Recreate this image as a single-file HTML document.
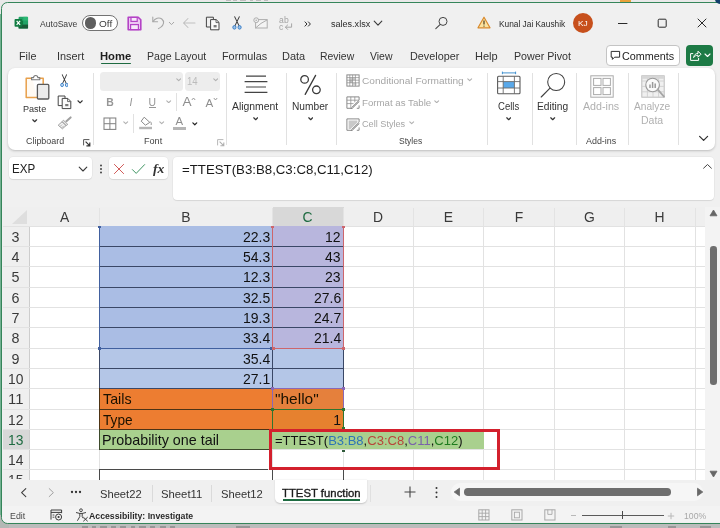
<!DOCTYPE html>
<html lang="en"><head><meta charset="utf-8"><title>sales.xlsx - Excel</title>
<style>
html,body{margin:0;padding:0;}
body{width:720px;height:528px;overflow:hidden;background:#e9e9e9;}
#root{will-change:transform;position:relative;width:720px;height:528px;overflow:hidden;background:#e9e9e9;font-family:"Liberation Sans",sans-serif;}
#root div,#root svg,#root span{position:absolute;box-sizing:border-box;}
.t{white-space:nowrap;line-height:1;}
#root span.f{position:static;}
#win{left:0.8px;top:2px;width:740px;height:522px;border:1.5px solid #35855a;border-radius:6.5px;background:#f0f0f0;}
#ribbon{left:8px;top:67.6px;width:707.2px;height:82px;background:#fff;border-radius:7px;box-shadow:0 1px 2.5px rgba(0,0,0,.22);}
.vsep{width:1px;background:#e1e1e1;}
.box{background:#fff;border-radius:4px;box-shadow:0 0 0 .5px rgba(0,0,0,.06),0 1px 1px rgba(0,0,0,.08);}
.gl{background:#e2e2e2;}

</style></head>
<body>
<div id="root">
<div style="left:0;top:522px;width:720px;height:6px;background:#bcbcbc;"></div>
<div style="left:82px;top:526px;width:6px;height:1.6px;background:#5e5e5e;opacity:.4;"></div>
<div style="left:92px;top:526px;width:4px;height:1.6px;background:#5e5e5e;opacity:.4;"></div>
<div style="left:100px;top:526px;width:7px;height:1.6px;background:#5e5e5e;opacity:.4;"></div>
<div style="left:111px;top:526px;width:5px;height:1.6px;background:#5e5e5e;opacity:.4;"></div>
<div style="left:120px;top:526px;width:6px;height:1.6px;background:#5e5e5e;opacity:.4;"></div>
<div style="left:131px;top:526px;width:4px;height:1.6px;background:#5e5e5e;opacity:.4;"></div>
<div style="left:139px;top:526px;width:7px;height:1.6px;background:#5e5e5e;opacity:.4;"></div>
<div style="left:150px;top:526px;width:5px;height:1.6px;background:#5e5e5e;opacity:.4;"></div>
<div style="left:160px;top:526px;width:6px;height:1.6px;background:#5e5e5e;opacity:.4;"></div>
<div style="left:170px;top:526px;width:5px;height:1.6px;background:#5e5e5e;opacity:.4;"></div>
<div style="left:236px;top:526px;width:14px;height:1.6px;background:#5e5e5e;opacity:.4;"></div>
<div style="left:610px;top:526px;width:12px;height:1.6px;background:#5e5e5e;opacity:.4;"></div>
<div style="left:668px;top:526px;width:8px;height:1.6px;background:#5e5e5e;opacity:.4;"></div>
<div style="left:700px;top:526px;width:11px;height:1.6px;background:#5e5e5e;opacity:.4;"></div>
<div style="left:620px;top:0;width:11px;height:1.6px;background:#e9a23b;"></div>
<div style="left:226px;top:0;width:5px;height:1.4px;background:#8a8a8a;opacity:.45;"></div>
<div style="left:233px;top:0;width:4px;height:1.4px;background:#8a8a8a;opacity:.45;"></div>
<div style="left:240px;top:0;width:6px;height:1.4px;background:#8a8a8a;opacity:.45;"></div>
<div style="left:250px;top:0;width:3px;height:1.4px;background:#8a8a8a;opacity:.45;"></div>
<div style="left:256px;top:0;width:5px;height:1.4px;background:#8a8a8a;opacity:.45;"></div>
<div style="left:264px;top:0;width:4px;height:1.4px;background:#8a8a8a;opacity:.45;"></div>
<div style="left:0;top:14px;width:2px;height:502px;background:#74b192;"></div>
<div style="left:0;top:515px;width:9px;height:13px;background:#b4b8b5;"></div>
<div id="win"></div>
<div style="left:715px;top:-2px;width:10px;height:5.6px;background:#123f6b;border-radius:0 0 0 5px;"></div>
<div style="left:2.5px;top:207px;width:702.5px;height:273px;background:#efefef;"></div>
<div style="left:30px;top:226px;width:675px;height:254px;background:#fff;"></div>
<div style="left:272.5px;top:206.5px;width:71px;height:20.5px;background:#d8d8d8;border-bottom:1.2px solid #1e6b41;"></div>
<div style="left:2.5px;top:429px;width:27.5px;height:20.5px;background:#d8d8d8;border-right:1.5px solid #1e6b41;"></div>
<svg style="left:11px;top:209px" width="17" height="16" viewBox="0 0 17 16"><path d="M16 1 V15 H1 Z" fill="#dedede"/></svg>
<div style="left:99px;top:208px;width:1px;height:18px;background:#e3e3e3;"></div>
<div style="left:272px;top:208px;width:1px;height:18px;background:#e3e3e3;"></div>
<div style="left:343px;top:208px;width:1px;height:18px;background:#e3e3e3;"></div>
<div style="left:413px;top:208px;width:1px;height:18px;background:#e3e3e3;"></div>
<div style="left:483px;top:208px;width:1px;height:18px;background:#e3e3e3;"></div>
<div style="left:554px;top:208px;width:1px;height:18px;background:#e3e3e3;"></div>
<div style="left:624px;top:208px;width:1px;height:18px;background:#e3e3e3;"></div>
<div style="left:695px;top:208px;width:1px;height:18px;background:#e3e3e3;"></div>
<div class="gl" style="left:29px;top:226px;width:1px;height:254px;background:#cdcdcd;"></div>
<div class="gl" style="left:99px;top:226px;width:1px;height:254px;"></div>
<div class="gl" style="left:272px;top:226px;width:1px;height:254px;"></div>
<div class="gl" style="left:343px;top:226px;width:1px;height:254px;"></div>
<div class="gl" style="left:413px;top:226px;width:1px;height:254px;"></div>
<div class="gl" style="left:483px;top:226px;width:1px;height:254px;"></div>
<div class="gl" style="left:554px;top:226px;width:1px;height:254px;"></div>
<div class="gl" style="left:624px;top:226px;width:1px;height:254px;"></div>
<div class="gl" style="left:695px;top:226px;width:1px;height:254px;"></div>
<div class="gl" style="left:2.5px;top:226px;width:702.5px;height:1px;"></div>
<div class="gl" style="left:2.5px;top:246px;width:702.5px;height:1px;"></div>
<div class="gl" style="left:2.5px;top:266px;width:702.5px;height:1px;"></div>
<div class="gl" style="left:2.5px;top:287px;width:702.5px;height:1px;"></div>
<div class="gl" style="left:2.5px;top:307px;width:702.5px;height:1px;"></div>
<div class="gl" style="left:2.5px;top:327px;width:702.5px;height:1px;"></div>
<div class="gl" style="left:2.5px;top:348px;width:702.5px;height:1px;"></div>
<div class="gl" style="left:2.5px;top:368px;width:702.5px;height:1px;"></div>
<div class="gl" style="left:2.5px;top:388px;width:702.5px;height:1px;"></div>
<div class="gl" style="left:2.5px;top:409px;width:702.5px;height:1px;"></div>
<div class="gl" style="left:2.5px;top:429px;width:702.5px;height:1px;"></div>
<div class="gl" style="left:2.5px;top:449px;width:702.5px;height:1px;"></div>
<div class="gl" style="left:2.5px;top:469px;width:702.5px;height:1px;"></div>
<div style="left:99.0px;top:226.0px;width:173.0px;height:122.0px;background:#aabde4;"></div>
<div style="left:99.0px;top:348.0px;width:245.0px;height:40.0px;background:#b4c6e7;"></div>
<div style="left:272.0px;top:226.0px;width:72.0px;height:122.0px;background:#b8b6dd;"></div>
<div style="left:99.0px;top:388.0px;width:173.0px;height:41.0px;background:#ed7d31;"></div>
<div style="left:272.0px;top:388.0px;width:72.0px;height:21.0px;background:#e5803c;"></div>
<div style="left:272.0px;top:409.0px;width:72.0px;height:20.0px;background:#e6812f;"></div>
<div style="left:99.0px;top:429.0px;width:173.0px;height:20.0px;background:#a9d08e;"></div>
<div style="left:271.0px;top:431.0px;width:213.0px;height:18.0px;background:#a9d08e;"></div>
<div style="left:99.0px;top:246.0px;width:245.0px;height:1.0px;background:#3a4766;"></div>
<div style="left:99.0px;top:266.0px;width:245.0px;height:1.0px;background:#3a4766;"></div>
<div style="left:99.0px;top:287.0px;width:245.0px;height:1.0px;background:#3a4766;"></div>
<div style="left:99.0px;top:307.0px;width:245.0px;height:1.0px;background:#3a4766;"></div>
<div style="left:99.0px;top:327.0px;width:245.0px;height:1.0px;background:#3a4766;"></div>
<div style="left:99.0px;top:348.0px;width:245.0px;height:1.0px;background:#3a4766;"></div>
<div style="left:99.0px;top:368.0px;width:245.0px;height:1.0px;background:#3a4766;"></div>
<div style="left:99.0px;top:388.0px;width:245.0px;height:1.0px;background:#3a4766;"></div>
<div style="left:99.0px;top:409.0px;width:245.0px;height:1.0px;background:#4d3315;"></div>
<div style="left:99.0px;top:429.0px;width:245.0px;height:1.0px;background:#4d3315;"></div>
<div style="left:99.0px;top:449.0px;width:171.0px;height:1.0px;background:#3d4a2c;"></div>
<div style="left:99.0px;top:226.0px;width:1.0px;height:162.0px;background:#3a4766;"></div>
<div style="left:99.0px;top:388.0px;width:1.0px;height:41.0px;background:#4d3315;"></div>
<div style="left:99.0px;top:429.0px;width:1.0px;height:21.0px;background:#3d4a2c;"></div>
<div style="left:272.0px;top:348.0px;width:1.0px;height:40.0px;background:#3a4766;"></div>
<div style="left:272.0px;top:388.0px;width:1.0px;height:41.0px;background:#4d3315;"></div>
<div style="left:343.0px;top:348.0px;width:1.0px;height:40.0px;background:#3a4766;"></div>
<div style="left:99.0px;top:469.0px;width:169.0px;height:1.0px;background:#4a4a4a;"></div>
<div style="left:99.0px;top:469.0px;width:1.0px;height:11.0px;background:#4a4a4a;"></div>
<div style="left:272.0px;top:470.0px;width:1.0px;height:10.0px;background:#4a4a4a;"></div>
<div style="left:343.0px;top:470.0px;width:1.0px;height:10.0px;background:#4a4a4a;"></div>
<div style="left:99.0px;top:226.0px;width:1.0px;height:123.0px;background:#41609f;"></div>
<div style="left:99.0px;top:348.0px;width:173.0px;height:1.0px;background:#41609f;"></div>
<div style="left:272.0px;top:226.0px;width:1.0px;height:123.0px;background:#cd666c;"></div>
<div style="left:343.0px;top:226.0px;width:1.0px;height:123.0px;background:#cd666c;"></div>
<div style="left:272.0px;top:348.0px;width:72.0px;height:1.0px;background:#cd666c;"></div>
<div style="left:272.0px;top:388.0px;width:1.0px;height:22.0px;background:#8a68b6;"></div>
<div style="left:343.0px;top:388.0px;width:1.0px;height:22.0px;background:#8a68b6;"></div>
<div style="left:272.0px;top:388.0px;width:72.0px;height:1.0px;background:#8a68b6;"></div>
<div style="left:272.0px;top:409.0px;width:1.0px;height:20.0px;background:#2f752f;"></div>
<div style="left:343.0px;top:409.0px;width:1.0px;height:20.0px;background:#2f752f;"></div>
<div style="left:272.0px;top:409.0px;width:72.0px;height:1.0px;background:#2f752f;"></div>
<div style="left:98.0px;top:347.0px;width:3.0px;height:3.0px;background:#41609f;"></div>
<div style="left:270.0px;top:347.0px;width:3.0px;height:3.0px;background:#41609f;"></div>
<div style="left:98.0px;top:226.0px;width:3.0px;height:2.0px;background:#41609f;"></div>
<div style="left:342.0px;top:347.0px;width:3.0px;height:3.0px;background:#cd666c;"></div>
<div style="left:272.0px;top:347.0px;width:3.0px;height:3.0px;background:#cd666c;"></div>
<div style="left:271.0px;top:226.0px;width:3.0px;height:2.0px;background:#cd666c;"></div>
<div style="left:342.0px;top:226.0px;width:3.0px;height:2.0px;background:#cd666c;"></div>
<div style="left:271.0px;top:387.0px;width:3.0px;height:3.0px;background:#8a68b6;"></div>
<div style="left:342.0px;top:387.0px;width:3.0px;height:3.0px;background:#8a68b6;"></div>
<div style="left:271.0px;top:408.0px;width:3.0px;height:3.0px;background:#2f752f;"></div>
<div style="left:342.0px;top:408.0px;width:3.0px;height:3.0px;background:#2f752f;"></div>
<div style="left:342.0px;top:427.0px;width:3.0px;height:3.0px;background:#2f752f;"></div>
<div style="left:342.0px;top:450.0px;width:3.0px;height:2.0px;background:#2f5a3a;"></div>
<div style="left:268.5px;top:429px;width:231.3px;height:40.8px;border:3.1px solid #d3202d;"></div>
<div class="t" id="cf" style="left:274.6px;top:434px;font-size:13.4px;color:#111;transform-origin:0 0;transform:scaleX(0.972);">=TTEST(<span class="f" style="color:#2e75b6">B3:B8</span>,<span class="f" style="color:#b8453a">C3:C8</span>,<span class="f" style="color:#7a62aa">C11</span>,<span class="f" style="color:#1e7b1e">C12</span>)</div>
<div style="left:705.0px;top:207.0px;width:15.0px;height:273.0px;background:#f3f3f3;"></div>
<svg style="left:709px;top:209px" width="9" height="8" viewBox="0 0 9 8"><path d="M1 6.8 L4.5 1 L8 6.8 Z" fill="#666" stroke="#666" stroke-width=".8" stroke-linejoin="round"/></svg>
<svg style="left:709px;top:470.4px" width="9" height="8" viewBox="0 0 9 8"><path d="M1 1.2 L4.5 7 L8 1.2 Z" fill="#666" stroke="#666" stroke-width=".8" stroke-linejoin="round"/></svg>
<div style="left:710.3px;top:245.5px;width:6.4px;height:139px;background:#6e6e6e;border-radius:3.2px;"></div>
<div style="left:2.5px;top:480.0px;width:717.5px;height:26.0px;background:#f0f0f0;"></div>
<div style="left:275px;top:480px;width:91.5px;height:23.4px;background:#fff;border-radius:0 0 5px 5px;box-shadow:0 0.5px 1.5px rgba(0,0,0,.18);"></div>
<div style="left:282.5px;top:499.3px;width:77.8px;height:1.7px;background:#1e6b41;"></div>
<div style="left:152.0px;top:485.0px;width:1.0px;height:17.0px;background:#dadada;"></div>
<div style="left:211.0px;top:485.0px;width:1.0px;height:17.0px;background:#dadada;"></div>
<div style="left:370.0px;top:485.0px;width:1.0px;height:17.0px;background:#e0e0e0;"></div>
<svg style="left:19px;top:485.8px" width="10" height="13" viewBox="0 0 10 13"><path d="M6.8 2.6 L2.6 6.6 L6.8 10.6" fill="none" stroke="#3a3a3a" stroke-width="1.05" stroke-linecap="round" stroke-linejoin="round"/></svg>
<svg style="left:46px;top:485.8px" width="10" height="13" viewBox="0 0 10 13"><path d="M3.2 2.6 L7.4 6.6 L3.2 10.6" fill="none" stroke="#a2a2a2" stroke-width="1" stroke-linecap="round" stroke-linejoin="round"/></svg>
<svg style="left:70px;top:489px" width="12" height="6" viewBox="0 0 12 6"><circle cx="2" cy="3" r="1.15" fill="#333"/><circle cx="6" cy="3" r="1.15" fill="#333"/><circle cx="10" cy="3" r="1.15" fill="#333"/></svg>
<svg style="left:402.6px;top:485.3px" width="14" height="14" viewBox="0 0 14 14"><path d="M7 1.5 V12.5 M1.5 7 H12.5" stroke="#444" stroke-width="1.1"/></svg>
<svg style="left:434px;top:486px" width="5" height="13" viewBox="0 0 5 13"><circle cx="2.5" cy="2" r="1" fill="#333"/><circle cx="2.5" cy="6.5" r="1" fill="#333"/><circle cx="2.5" cy="11" r="1" fill="#333"/></svg>
<div style="left:451px;top:483px;width:252px;height:18px;background:#f6f6f6;border-radius:9px;"></div>
<svg style="left:453px;top:487px" width="8" height="10" viewBox="0 0 8 10"><path d="M6.5 1.2 L1.2 5 L6.5 8.8 Z" fill="#686868" stroke="#686868" stroke-width=".8" stroke-linejoin="round"/></svg>
<svg style="left:695.5px;top:487px" width="8" height="10" viewBox="0 0 8 10"><path d="M1.5 1.2 L6.8 5 L1.5 8.8 Z" fill="#686868" stroke="#686868" stroke-width=".8" stroke-linejoin="round"/></svg>
<div style="left:464px;top:488.3px;width:207px;height:7.6px;background:#6e6e6e;border-radius:3.8px;"></div>
<div style="left:2.5px;top:505.5px;width:717.5px;height:0.8px;background:#e2e2e2;"></div>
<div style="left:2.3px;top:506.3px;width:717.7px;height:16.2px;background:#f3f3f3;border-radius:0 0 0 5px;"></div><!-- ============ TITLE BAR ============ -->
<!-- excel logo -->
<svg style="left:14px;top:16.3px" width="14.6" height="13.4" viewBox="0 0 16 14">
  <rect x="5" y="0.6" width="10.4" height="12.8" rx="1.2" fill="#21a366"/>
  <rect x="10.2" y="0.6" width="5.2" height="4.3" fill="#2bb673"/>
  <rect x="5" y="4.9" width="5.2" height="4.2" fill="#107c41"/>
  <rect x="10.2" y="4.9" width="5.2" height="4.2" fill="#21a366"/>
  <rect x="5" y="9.1" width="10.4" height="4.3" fill="#185c37"/>
  <rect x="0.6" y="3" width="8.4" height="8.4" rx="1" fill="#107c41"/>
  <path d="M2.9 4.9 L6.7 9.5 M6.7 4.9 L2.9 9.5" stroke="#fff" stroke-width="1.3"/>
</svg>
<!-- autosave toggle -->
<div style="left:82px;top:15px;width:35.5px;height:16px;border:1px solid #737373;border-radius:8px;background:#fff;"></div>
<div style="left:84.8px;top:17.2px;width:11.6px;height:11.6px;border-radius:50%;background:#5e5e5e;"></div>
<!-- save -->
<svg style="left:126.5px;top:15.5px" width="15" height="15" viewBox="0 0 15 15">
  <path d="M1.2 1.2 H11.2 L13.8 3.8 V13.8 H1.2 Z" fill="#ecc6f2" stroke="#b443c6" stroke-width="1.6" stroke-linejoin="round"/>
  <rect x="4" y="1.4" width="6.2" height="4" fill="#f7e9fa" stroke="#b443c6" stroke-width="1.2"/>
  <rect x="3.6" y="8.6" width="7.8" height="5" fill="#f7e9fa" stroke="#b443c6" stroke-width="1.2"/>
</svg>
<!-- undo -->
<svg style="left:151px;top:15px" width="15" height="15" viewBox="0 0 15 15">
  <path d="M1.8 2 V6.8 H6.6" fill="none" stroke="#a6a6a6" stroke-width="1.05" stroke-linecap="round" stroke-linejoin="round"/>
  <path d="M2 6.6 C4 3.2 8 2 10.8 4 C13.6 6.2 13 10 9.6 12.4 L7.4 13.6" fill="none" stroke="#a6a6a6" stroke-width="1.05" stroke-linecap="round"/>
</svg>
<svg style="left:168px;top:21px" width="7" height="5" viewBox="0 0 7 5"><path d="M1 1 L3.5 3.6 L6 1" fill="none" stroke="#a8a8a8" stroke-width="1"/></svg>
<!-- back arrow (redo disabled) -->
<svg style="left:182px;top:17px" width="14" height="12" viewBox="0 0 14 12"><path d="M13 6 H1.5 M6 1.5 L1.5 6 L6 10.5" fill="none" stroke="#c0c0c0" stroke-width="1.05" stroke-linecap="round" stroke-linejoin="round"/></svg>
<!-- copy/paste icon -->
<svg style="left:205px;top:16px" width="16" height="15" viewBox="0 0 16 15">
  <path d="M5.2 11 H1.4 V1.2 H8.4 V3.4" fill="none" stroke="#444" stroke-width="1"/>
  <path d="M5.6 3.6 H11.2 L14 6.4 V13.8 H5.6 Z" fill="#fafafa" stroke="#444" stroke-width="1" stroke-linejoin="round"/>
  <path d="M11 3.8 V6.6 H13.8" fill="none" stroke="#444" stroke-width=".8"/>
  <rect x="8.6" y="9" width="3" height="2.4" fill="#7a7a7a"/>
</svg>
<!-- scissors -->
<svg style="left:231.6px;top:16px" width="10" height="14.2" viewBox="0 0 12 15" preserveAspectRatio="none">
  <path d="M3.2 0.8 L8.6 10.6 M8.8 0.8 L3.4 10.6" stroke="#3a3a3a" stroke-width="1.1" stroke-linecap="round"/>
  <circle cx="2.9" cy="12" r="1.9" fill="#9cc3ea" stroke="#2f78c4" stroke-width="1"/>
  <circle cx="9.1" cy="12" r="1.9" fill="#9cc3ea" stroke="#2f78c4" stroke-width="1"/>
</svg>
<!-- mail -->
<svg style="left:252.5px;top:16.5px" width="15" height="12" viewBox="0 0 15 12">
  <rect x="2.6" y="2.6" width="11.6" height="8.4" fill="#f4f4f4" stroke="#adadad" stroke-width="1"/>
  <path d="M2.8 10.8 L8 6.4 L14 3" fill="none" stroke="#adadad" stroke-width="1"/>
  <circle cx="3.2" cy="3.2" r="2.4" fill="#f0f0f0" stroke="#adadad" stroke-width="1"/>
  <circle cx="3.2" cy="3.2" r=".8" fill="#adadad"/>
</svg>
<!-- abc spelling -->
<div class="t" style="left:279px;top:16px;font-size:8.6px;color:#a4a4a4;letter-spacing:.3px;">ab</div>
<div class="t" style="left:279px;top:22.6px;font-size:8.6px;color:#a4a4a4;">c</div>
<svg style="left:283.5px;top:23px" width="9" height="8" viewBox="0 0 9 8"><path d="M7.6 0.8 V4.2 H1.6 M3.6 2 L1.4 4.2 L3.6 6.4" fill="none" stroke="#a6a6a6" stroke-width="1" stroke-linecap="round" stroke-linejoin="round"/></svg>
<!-- >> -->
<svg style="left:304px;top:21px" width="8" height="6" viewBox="0 0 8 6"><path d="M1 .9 L3 3 L1 5.1 M4.4 .9 L6.4 3 L4.4 5.1" fill="none" stroke="#2e2e2e" stroke-width="1" stroke-linecap="round" stroke-linejoin="round"/></svg>
<!-- chevron after filename -->
<svg style="left:373px;top:20px" width="10" height="7" viewBox="0 0 10 7"><path d="M1.2 1.2 L5 5.2 L8.8 1.2" fill="none" stroke="#3a3a3a" stroke-width="1.1" stroke-linecap="round" stroke-linejoin="round"/></svg>
<!-- search -->
<svg style="left:434px;top:16px" width="15" height="14" viewBox="0 0 15 14"><circle cx="9" cy="5.4" r="4" fill="none" stroke="#444" stroke-width="1"/><path d="M6 8.6 L1.8 12.6" stroke="#444" stroke-width="1.05" stroke-linecap="round"/></svg>
<!-- warning -->
<svg style="left:477px;top:16px" width="14" height="13" viewBox="0 0 14 13"><path d="M7 1.2 L13 11.8 H1 Z" fill="#fbe3a0" stroke="#d8892b" stroke-width="1.2" stroke-linejoin="round"/><path d="M7 4.6 V8.4" stroke="#4a3a1a" stroke-width="1.2"/><circle cx="7" cy="10.1" r=".7" fill="#4a3a1a"/></svg>
<!-- avatar -->
<div style="left:573px;top:13px;width:20px;height:20px;border-radius:50%;background:#c7501c;"></div>
<!-- window controls -->
<svg style="left:617px;top:22px" width="12" height="3" viewBox="0 0 12 3"><path d="M1 1.5 H10.4" stroke="#2a2a2a" stroke-width="1"/></svg>
<svg style="left:657px;top:18px" width="11" height="11" viewBox="0 0 11 11"><rect x="1.2" y="1.2" width="8" height="8" rx="1" fill="none" stroke="#2a2a2a" stroke-width="1"/></svg>
<svg style="left:696px;top:16.9px" width="12" height="12" viewBox="0 0 12 12"><path d="M2 2 L10 10 M10 2 L2 10" stroke="#2a2a2a" stroke-width="1" stroke-linecap="round"/></svg>
<!-- ============ TAB ROW ============ -->
<div style="left:100.6px;top:62.6px;width:30.6px;height:1.8px;background:#1e6b41;border-radius:1px;"></div>
<div style="left:605.5px;top:45px;width:74px;height:20.5px;background:#fff;border:1px solid #c4c4c4;border-radius:4px;"></div>
<svg style="left:609.5px;top:49.5px" width="11" height="11" viewBox="0 0 11 11"><path d="M1.2 1.4 H9.6 V7.2 H4.6 L2.4 9.4 V7.2 H1.2 Z" fill="none" stroke="#2e2e2e" stroke-width="1" stroke-linejoin="round"/></svg>
<div style="left:686px;top:45px;width:26.5px;height:20.5px;background:#1d7a45;border-radius:4px;"></div>
<svg style="left:689px;top:48.5px" width="13" height="13" viewBox="0 0 13 13"><path d="M4.2 4.6 H1.6 V11.4 H9.6 V9" fill="none" stroke="#fff" stroke-width="1" stroke-linejoin="round"/><path d="M4.6 8.6 C5 5.6 7 4.4 9 4.4 V2.2 L12 5.2 L9 8.2 V6.2 C7.4 6.2 5.8 6.8 4.6 8.6 Z" fill="none" stroke="#fff" stroke-width="1" stroke-linejoin="round"/></svg>
<svg style="left:703.5px;top:53px" width="7" height="5" viewBox="0 0 7 5"><path d="M1 1 L3.5 3.5 L6 1" fill="none" stroke="#fff" stroke-width="1.1" stroke-linecap="round" stroke-linejoin="round"/></svg>
<!-- ============ RIBBON ============ -->
<div id="ribbon"></div>
<div class="vsep" style="left:93.2px;top:73px;height:72px;"></div>
<div class="vsep" style="left:226px;top:73px;height:72px;"></div>
<div class="vsep" style="left:285.5px;top:73px;height:72px;"></div>
<div class="vsep" style="left:335.5px;top:73px;height:72px;"></div>
<div class="vsep" style="left:486.5px;top:73px;height:72px;"></div>
<div class="vsep" style="left:531.5px;top:73px;height:72px;"></div>
<div class="vsep" style="left:576px;top:73px;height:72px;"></div>
<div class="vsep" style="left:627.5px;top:73px;height:72px;"></div>
<div class="vsep" style="left:677.5px;top:73px;height:72px;"></div>
<div class="vsep" style="left:176.2px;top:93px;height:18px;"></div>
<div class="vsep" style="left:133px;top:114px;height:19px;"></div>
<!-- paste -->
<svg style="left:24px;top:74px" width="27" height="27" viewBox="0 0 27 27">
  <path d="M8.2 4.2 H2.2 V23.4 H13" fill="#fffaf3" stroke="#e8a04b" stroke-width="1.5" stroke-linejoin="round"/>
  <path d="M15.4 4.2 H19.2 V10" fill="none" stroke="#e8a04b" stroke-width="1.5" stroke-linejoin="round"/>
  <path d="M7.6 5.8 V3.6 H9.6 C9.6 0.8 13.8 0.8 13.8 3.6 H15.8 V5.8 Z" fill="#fff" stroke="#7a7a7a" stroke-width="1.1" stroke-linejoin="round"/>
  <rect x="13.4" y="10.4" width="11.4" height="14.6" rx="1" fill="#ececec" stroke="#5a5a5a" stroke-width="1.3"/>
</svg>
<svg style="left:32.3px;top:119.1px" width="5.4" height="3.9" viewBox="0 0 7 5"><path d="M1 1 L3.5 3.5 L6 1" fill="none" stroke="#333" stroke-width="1.54" stroke-linecap="round" stroke-linejoin="round"/></svg>
<!-- scissors -->
<svg style="left:59.6px;top:74px" width="8.8" height="13.6" viewBox="0 0 11 14" preserveAspectRatio="none">
  <path d="M2.8 0.8 L7.8 9.8 M8.2 0.8 L3.2 9.8" stroke="#3a3a3a" stroke-width="1.05" stroke-linecap="round"/>
  <circle cx="2.6" cy="11.3" r="1.7" fill="#cfe2f6" stroke="#2f78c4" stroke-width="1"/>
  <circle cx="8.4" cy="11.3" r="1.7" fill="#cfe2f6" stroke="#2f78c4" stroke-width="1"/>
</svg>
<!-- copy -->
<svg style="left:56.5px;top:95px" width="16" height="15" viewBox="0 0 16 15">
  <path d="M5 10.6 H1.2 V1 H8 V3.2" fill="none" stroke="#444" stroke-width="1"/>
  <path d="M5.2 3.4 H10.8 L13.8 6.4 V13.6 H5.2 Z" fill="#fafafa" stroke="#444" stroke-width="1" stroke-linejoin="round"/>
  <path d="M10.6 3.6 V6.6 H13.6" fill="none" stroke="#444" stroke-width=".8"/>
  <rect x="8.2" y="9" width="3.2" height="2.2" fill="#7a7a7a"/>
</svg>
<svg style="left:76.6px;top:100.4px" width="6.2" height="3.9" viewBox="0 0 8 5"><path d="M1.2 1 L4 3.7 L6.8 1" fill="none" stroke="#333" stroke-width="1.5" stroke-linecap="round" stroke-linejoin="round"/></svg>
<!-- format painter -->
<svg style="left:56.5px;top:116px" width="15" height="14" viewBox="0 0 15 14">
  <path d="M13.6 1.4 L9.4 5.2" stroke="#a0a0a0" stroke-width="2" stroke-linecap="round"/>
  <path d="M6.4 4.2 L10.8 8.4 L9.2 9.6 L5.2 5.6 Z" fill="#e8e8e8" stroke="#a0a0a0" stroke-width="1" stroke-linejoin="round"/>
  <path d="M5 5.8 L1.2 9.2 L5.4 12.8 L9 9.6 Z" fill="#f2f2f2" stroke="#a0a0a0" stroke-width="1" stroke-linejoin="round"/>
  <path d="M3 10.6 L5 8.6 M4.6 12 L6.8 9.8" stroke="#a0a0a0" stroke-width=".8"/>
</svg>
<!-- launchers -->
<svg style="left:83px;top:138.5px" width="8" height="8" viewBox="0 0 8 8"><path d="M0.6 6.4 V0.6 H6.4" fill="none" stroke="#555" stroke-width="1"/><path d="M2.6 2.6 L6.6 6.6 M6.8 3.4 V6.8 H3.4" fill="none" stroke="#333" stroke-width="1.2"/></svg>
<svg style="left:216.5px;top:138.5px" width="8" height="8" viewBox="0 0 8 8"><path d="M0.6 6.4 V0.6 H6.4" fill="none" stroke="#b8b8b8" stroke-width="1"/><path d="M2.6 2.6 L6.6 6.6 M6.8 3.4 V6.8 H3.4" fill="none" stroke="#b0b0b0" stroke-width="1.1"/></svg>
<!-- font boxes -->
<div style="left:100px;top:71.5px;width:82.6px;height:19.2px;background:#ededed;border-radius:3.5px;"></div>
<div style="left:185px;top:71.5px;width:34.8px;height:19.2px;background:#ededed;border-radius:3.5px;"></div>
<svg style="left:175.8px;top:78.1px" width="5.4" height="3.9" viewBox="0 0 7 5"><path d="M1 1 L3.5 3.5 L6 1" fill="none" stroke="#b0b0b0" stroke-width="1.40" stroke-linecap="round" stroke-linejoin="round"/></svg>
<svg style="left:212.8px;top:78.1px" width="5.4" height="3.9" viewBox="0 0 7 5"><path d="M1 1 L3.5 3.5 L6 1" fill="none" stroke="#b0b0b0" stroke-width="1.40" stroke-linecap="round" stroke-linejoin="round"/></svg>
<!-- B I U -->
<div class="t" style="left:106.3px;top:98px;font-size:10.4px;font-weight:700;color:#969696;">B</div>
<div class="t" style="left:129.6px;top:98px;font-size:10.4px;font-style:italic;color:#969696;">I</div>
<div class="t" style="left:148.6px;top:98px;font-size:10.4px;color:#969696;">U</div>
<div style="left:149px;top:106.8px;width:7.2px;height:1px;background:#969696;"></div>
<svg style="left:166.2px;top:99.6px" width="5.4" height="3.9" viewBox="0 0 7 5"><path d="M1 1 L3.5 3.5 L6 1" fill="none" stroke="#b0b0b0" stroke-width="1.40" stroke-linecap="round" stroke-linejoin="round"/></svg>
<!-- A^ A v -->
<div class="t" style="left:182.6px;top:95.4px;font-size:13.6px;color:#8e8e8e;">A</div>
<svg style="left:191.4px;top:96.6px" width="5" height="4" viewBox="0 0 5 4"><path d="M0.8 3 L2.5 1 L4.2 3" fill="none" stroke="#8e8e8e" stroke-width=".9"/></svg>
<div class="t" style="left:205.6px;top:97.2px;font-size:11.6px;color:#8e8e8e;">A</div>
<svg style="left:212.6px;top:97.4px" width="5" height="4" viewBox="0 0 5 4"><path d="M0.8 1 L2.5 3 L4.2 1" fill="none" stroke="#8e8e8e" stroke-width=".9"/></svg>
<!-- borders -->
<svg style="left:102.5px;top:116.8px" width="14" height="14" viewBox="0 0 14 14"><rect x="1" y="1" width="11.8" height="11.4" fill="none" stroke="#828282" stroke-width="1.05"/><path d="M6.9 1 V12.4 M1 6.7 H12.8" stroke="#828282" stroke-width="1"/></svg>
<svg style="left:123.4px;top:121.2px" width="5.4" height="3.9" viewBox="0 0 7 5"><path d="M1 1 L3.5 3.5 L6 1" fill="none" stroke="#b0b0b0" stroke-width="1.40" stroke-linecap="round" stroke-linejoin="round"/></svg>
<!-- fill -->
<svg style="left:139px;top:116.4px" width="14" height="14" viewBox="0 0 14 14">
  <path d="M5.2 1.2 L10.8 6.4 L6.4 9.2 L2.2 5.2 Z" fill="#fff" stroke="#8a8a8a" stroke-width="1" stroke-linejoin="round"/>
  <path d="M11.4 5.6 C12.4 7 12.6 8 12 9" fill="none" stroke="#8a8a8a" stroke-width="1"/>
  <rect x="0.2" y="10.8" width="12.8" height="2.4" fill="#b5b5b5"/>
</svg>
<svg style="left:159.2px;top:121.2px" width="5.4" height="3.9" viewBox="0 0 7 5"><path d="M1 1 L3.5 3.5 L6 1" fill="none" stroke="#b0b0b0" stroke-width="1.40" stroke-linecap="round" stroke-linejoin="round"/></svg>
<!-- font color -->
<div class="t" style="left:175.6px;top:115.6px;font-size:11.4px;color:#8e8e8e;">A</div>
<div style="left:173.3px;top:127.2px;width:12.6px;height:2.4px;background:#b5b5b5;"></div>
<svg style="left:192.2px;top:121.6px" width="5.6" height="4.2" viewBox="0 0 8 6"><path d="M1.2 1.2 L4 4 L6.8 1.2" fill="none" stroke="#222" stroke-width="1.7" stroke-linecap="round" stroke-linejoin="round"/></svg>
<!-- alignment -->
<svg style="left:243px;top:74px" width="26" height="21" viewBox="0 0 26 21"><path d="M3 2.2 H23 M1.6 7.6 H24.4 M3 13 H23 M1.6 18.4 H24.4" stroke="#444" stroke-width="1.2"/></svg>
<svg style="left:252.8px;top:117.2px" width="5.4" height="3.9" viewBox="0 0 7 5"><path d="M1 1 L3.5 3.5 L6 1" fill="none" stroke="#333" stroke-width="1.54" stroke-linecap="round" stroke-linejoin="round"/></svg>
<!-- percent -->
<svg style="left:299px;top:74px" width="24" height="22" viewBox="0 0 24 22"><circle cx="5.6" cy="5.4" r="3.8" fill="none" stroke="#3a3a3a" stroke-width="1.3"/><circle cx="17.4" cy="15.8" r="3.8" fill="none" stroke="#3a3a3a" stroke-width="1.3"/><path d="M16.6 1.4 L6.2 20.4" stroke="#3a3a3a" stroke-width="1.3" stroke-linecap="round"/></svg>
<svg style="left:307.8px;top:117.2px" width="5.4" height="3.9" viewBox="0 0 7 5"><path d="M1 1 L3.5 3.5 L6 1" fill="none" stroke="#333" stroke-width="1.54" stroke-linecap="round" stroke-linejoin="round"/></svg>
<!-- styles icons -->
<svg style="left:345.6px;top:74.4px" width="14" height="13" viewBox="0 0 14 13"><rect x=".9" y=".9" width="12.2" height="11.2" fill="#fff" stroke="#858585" stroke-width=".95"/><rect x="3.8" y="3.6" width="5.6" height="2.6" fill="#cfcfcf"/><rect x="3.8" y="6.2" width="2.8" height="2.6" fill="#bdbdbd"/><rect x="6.6" y="8.8" width="4" height="2.6" fill="#d6d6d6"/><path d="M.9 3.6 H13.1 M.9 6.2 H13.1 M.9 8.8 H13.1 M3.8 .9 V12.1 M6.6 .9 V12.1 M9.4 .9 V12.1" stroke="#8c8c8c" stroke-width=".7"/></svg>
<svg style="left:345.6px;top:95.8px" width="14" height="13.4" viewBox="0 0 14 13.4"><path d="M.9 12.3 V.9 H13.1 V4" fill="none" stroke="#858585" stroke-width=".95"/><path d="M.9 12.3 H4.6 M13.1 9.4 V12.3 H10.8" fill="none" stroke="#858585" stroke-width=".95"/><path d="M.9 4.2 H13.1 M.9 7.6 H7.6 M4.8 .9 V12.3 M8.8 .9 V6.4" stroke="#8c8c8c" stroke-width=".75"/><path d="M13 4.4 L5.6 11.6 L4.6 12.6 L6.2 12.4 L13.4 5.4" fill="#fff" stroke="#7d7d7d" stroke-width=".9" stroke-linejoin="round"/><path d="M12 5.6 L6.4 11.2" stroke="#9a9a9a" stroke-width=".8"/></svg>
<svg style="left:345.6px;top:117.6px" width="14" height="13.4" viewBox="0 0 14 13.4"><path d="M.9 12.3 V.9 H13.1 V4" fill="none" stroke="#858585" stroke-width=".95"/><path d="M.9 12.3 H4.6 M13.1 9.4 V12.3 H10.8" fill="none" stroke="#858585" stroke-width=".95"/><path d="M2.6 2.6 H11.4 V4.6 L4.6 11 H2.6 Z" fill="#c9c9c9"/><path d="M13 4.4 L5.6 11.6 L4.6 12.6 L6.2 12.4 L13.4 5.4" fill="#fff" stroke="#7d7d7d" stroke-width=".9" stroke-linejoin="round"/><path d="M12 5.6 L6.4 11.2" stroke="#9a9a9a" stroke-width=".8"/></svg>
<svg style="left:467.4px;top:78.2px" width="5.4" height="3.9" viewBox="0 0 7 5"><path d="M1 1 L3.5 3.5 L6 1" fill="none" stroke="#b0b0b0" stroke-width="1.40" stroke-linecap="round" stroke-linejoin="round"/></svg>
<svg style="left:434.4px;top:99.6px" width="5.4" height="3.9" viewBox="0 0 7 5"><path d="M1 1 L3.5 3.5 L6 1" fill="none" stroke="#b0b0b0" stroke-width="1.40" stroke-linecap="round" stroke-linejoin="round"/></svg>
<svg style="left:409.2px;top:121.0px" width="5.4" height="3.9" viewBox="0 0 7 5"><path d="M1 1 L3.5 3.5 L6 1" fill="none" stroke="#b0b0b0" stroke-width="1.40" stroke-linecap="round" stroke-linejoin="round"/></svg>
<!-- cells -->
<svg style="left:496px;top:70.5px" width="26" height="25" viewBox="0 0 26 25">
  <path d="M6.4 1.9 H19.6 M6.4 .6 V3.2 M19.6 .6 V3.2" stroke="#2f86c9" stroke-width=".9" fill="none"/>
  <rect x="1.6" y="5.2" width="22.4" height="17.6" rx="1" fill="#fff" stroke="#5a5a5a" stroke-width="1.1"/>
  <rect x="7.2" y="10.6" width="11.2" height="6.4" fill="#5aa9ea"/>
  <path d="M1.6 10.6 H24 M1.6 17 H24 M7.2 5.2 V22.8 M18.4 5.2 V22.8" stroke="#6a6a6a" stroke-width=".9"/>
</svg>
<svg style="left:505.8px;top:117.2px" width="5.4" height="3.9" viewBox="0 0 7 5"><path d="M1 1 L3.5 3.5 L6 1" fill="none" stroke="#333" stroke-width="1.54" stroke-linecap="round" stroke-linejoin="round"/></svg>
<!-- editing -->
<svg style="left:539px;top:71.6px" width="28" height="27" viewBox="0 0 28 27"><circle cx="17.2" cy="10" r="8.5" fill="none" stroke="#404040" stroke-width="1.05"/><path d="M11 16.2 L2.2 25" stroke="#404040" stroke-width="1.15" stroke-linecap="round"/></svg>
<svg style="left:550.3px;top:117.2px" width="5.4" height="3.9" viewBox="0 0 7 5"><path d="M1 1 L3.5 3.5 L6 1" fill="none" stroke="#333" stroke-width="1.54" stroke-linecap="round" stroke-linejoin="round"/></svg>
<!-- add-ins -->
<svg style="left:589.5px;top:74.5px" width="24" height="23" viewBox="0 0 24 23"><rect x=".8" y=".8" width="22.4" height="21.4" fill="#fcfcfc" stroke="#ababab" stroke-width="1"/><rect x="3.6" y="3.4" width="7.4" height="7" fill="#fff" stroke="#ababab" stroke-width="1"/><rect x="13" y="3.4" width="7.4" height="7" fill="#fff" stroke="#ababab" stroke-width="1"/><rect x="3.6" y="12.6" width="7.4" height="7" fill="#fff" stroke="#ababab" stroke-width="1"/><rect x="13" y="12.6" width="7.4" height="7" fill="#fff" stroke="#ababab" stroke-width="1"/></svg>
<!-- analyze data -->
<svg style="left:640.5px;top:74.5px" width="24" height="24" viewBox="0 0 24 24"><rect x=".8" y=".8" width="22.4" height="21.4" fill="#f0f0f0" stroke="#bdbdbd" stroke-width="1"/><path d="M.8 6 H23.2 M.8 11.4 H23.2 M.8 16.8 H23.2 M6.4 .8 V22.2 M12 .8 V22.2 M17.6 .8 V22.2" stroke="#cfcfcf" stroke-width=".9"/><rect x=".8" y=".8" width="22.4" height="3" fill="#d6d6d6"/><circle cx="11.6" cy="10" r="6.8" fill="#fafafa" stroke="#9a9a9a" stroke-width="1.1"/><path d="M9 13 V9.6 M11.6 13 V7 M14.2 13 V8.6" stroke="#9a9a9a" stroke-width="1.5"/><path d="M16.6 14.4 L23 21.6" stroke="#a6a6a6" stroke-width="1.8" stroke-linecap="round"/></svg>
<!-- collapse chevron -->
<svg style="left:696.5px;top:135.4px" width="12" height="8" viewBox="0 0 12 8"><path d="M2.6 1.3 L6.6 5.3 L10.6 1.3" fill="none" stroke="#2e2e2e" stroke-width="1.2" stroke-linecap="round" stroke-linejoin="round"/></svg>
<!-- ============ FORMULA BAR ============ -->
<div class="box" style="left:9px;top:156.8px;width:82.5px;height:22.4px;"></div>
<svg style="left:78px;top:166px" width="10" height="7" viewBox="0 0 10 7"><path d="M1.2 1.2 L5 5 L8.8 1.2" fill="none" stroke="#3a3a3a" stroke-width="1.1" stroke-linecap="round" stroke-linejoin="round"/></svg>
<svg style="left:98.5px;top:164px" width="4" height="10" viewBox="0 0 4 10"><circle cx="2" cy="1.6" r="1" fill="#444"/><circle cx="2" cy="5" r="1" fill="#444"/><circle cx="2" cy="8.4" r="1" fill="#444"/></svg>
<div class="box" style="left:108.8px;top:156.8px;width:59.5px;height:22.4px;"></div>
<svg style="left:113px;top:163px" width="12" height="12" viewBox="0 0 12 12"><path d="M1.4 1.4 L10.6 10.6 M10.6 1.4 L1.4 10.6" stroke="#cf5250" stroke-width=".95" stroke-linecap="round"/></svg>
<svg style="left:131px;top:163px" width="15" height="12" viewBox="0 0 15 12"><path d="M1.4 6.6 L5.2 10.4 L13.6 1.6" fill="none" stroke="#3f9563" stroke-width="1" stroke-linecap="round" stroke-linejoin="round"/></svg>
<div class="box" style="left:173px;top:156.8px;width:540.8px;height:43.6px;"></div>
<svg style="left:701.6px;top:163.2px" width="11" height="7" viewBox="0 0 11 7"><path d="M1.6 5.2 L5.5 1.5 L9.4 5.2" fill="none" stroke="#444" stroke-width="1" stroke-linecap="round" stroke-linejoin="round"/></svg>
<!-- ============ STATUS BAR ICONS ============ -->
<svg style="left:49.5px;top:508.5px" width="13" height="12" viewBox="0 0 13 12"><path d="M1 10.6 V1 H11.6 V4.2 M1 3.4 H11.6" fill="none" stroke="#3a3a3a" stroke-width="1"/><path d="M2.6 6 H4.4 M2.6 8.2 H4.4" stroke="#3a3a3a" stroke-width=".9"/><circle cx="8.6" cy="8" r="3" fill="#f3f3f3" stroke="#3a3a3a" stroke-width="1"/><circle cx="8.6" cy="8" r="1.1" fill="#3a3a3a"/></svg>
<svg style="left:75px;top:507.5px" width="14" height="14" viewBox="0 0 14 14"><circle cx="6" cy="2.2" r="1.4" fill="none" stroke="#3a3a3a" stroke-width=".9"/><path d="M1.4 4.6 L4.6 5.4 H7.4 L10.6 4.6 M4.8 5.4 V8.6 L2.6 12.4 M7.2 5.4 V8.6 L8 10" fill="none" stroke="#3a3a3a" stroke-width=".95" stroke-linecap="round" stroke-linejoin="round"/><path d="M8.6 9.4 L12.4 13 M12.4 9.4 L8.6 13" stroke="#3a3a3a" stroke-width="1" stroke-linecap="round"/></svg>
<svg style="left:477.5px;top:509px" width="12" height="12" viewBox="0 0 12 12"><rect x=".8" y=".8" width="10.2" height="10.2" fill="none" stroke="#a8a8a8" stroke-width="1"/><path d="M.8 4.2 H11 M.8 7.6 H11 M4.2 .8 V11 M7.6 .8 V11" stroke="#a8a8a8" stroke-width=".9"/></svg>
<svg style="left:510.5px;top:509px" width="12" height="12" viewBox="0 0 12 12"><rect x=".8" y=".8" width="10.2" height="10.2" fill="none" stroke="#a8a8a8" stroke-width="1"/><rect x="3.4" y="3.2" width="5" height="5.6" fill="none" stroke="#a8a8a8" stroke-width=".9"/></svg>
<svg style="left:543.5px;top:509px" width="12" height="12" viewBox="0 0 12 12"><rect x=".8" y=".8" width="10.2" height="10.2" fill="none" stroke="#a8a8a8" stroke-width="1"/><path d="M3.8 .8 V5.4 H8 V.8" fill="none" stroke="#a8a8a8" stroke-width=".9"/></svg>
<div style="left:571px;top:514.6px;width:5.4px;height:1px;background:#b8b8b8;"></div>
<div style="left:582px;top:514.6px;width:81.5px;height:1px;background:#5a5a5a;"></div>
<div style="left:621.6px;top:511px;width:1.2px;height:8px;background:#4a4a4a;"></div>
<svg style="left:666.5px;top:511.5px" width="8" height="8" viewBox="0 0 8 8"><path d="M4 .8 V7.2 M.8 4 H7.2" stroke="#b8b8b8" stroke-width="1"/></svg>

<div class="t g" id="t0" style="left:40.37px;top:20.00px;font-size:9px;color:#3b3b3b;font-weight:400;font-style:normal;font-family:'Liberation Sans', sans-serif;transform-origin:0 0;transform:scaleX(0.9531);">AutoSave</div>
<div class="t g" id="t1" style="left:99.33px;top:19.00px;font-size:9.5px;color:#3b3b3b;font-weight:400;font-style:normal;font-family:'Liberation Sans', sans-serif;transform-origin:0 0;transform:scaleX(1.0560);">Off</div>
<div class="t g" id="t2" style="left:331.36px;top:20.00px;font-size:9.2px;color:#2b2b2b;font-weight:400;font-style:normal;font-family:'Liberation Sans', sans-serif;transform-origin:0 0;transform:scaleX(0.9842);">sales.xlsx</div>
<div class="t g" id="t3" style="left:499.40px;top:20.00px;font-size:8.6px;color:#2b2b2b;font-weight:400;font-style:normal;font-family:'Liberation Sans', sans-serif;transform-origin:0 0;transform:scaleX(0.9689);">Kunal Jai Kaushik</div>
<div class="t g" id="t4" style="left:578.25px;top:20.00px;font-size:7.8px;color:#ffffff;font-weight:400;font-style:normal;font-family:'Liberation Sans', sans-serif;transform-origin:0 0;transform:scaleX(1.0758);">KJ</div>
<div class="t g" id="t5" style="left:18.86px;top:51.00px;font-size:10.6px;color:#333333;font-weight:400;font-style:normal;font-family:'Liberation Sans', sans-serif;transform-origin:0 0;transform:scaleX(1.0188);">File</div>
<div class="t g" id="t6" style="left:57.26px;top:51.00px;font-size:10.6px;color:#333333;font-weight:400;font-style:normal;font-family:'Liberation Sans', sans-serif;transform-origin:0 0;transform:scaleX(1.0264);">Insert</div>
<div class="t g" id="t7" style="left:146.76px;top:51.00px;font-size:10.6px;color:#333333;font-weight:400;font-style:normal;font-family:'Liberation Sans', sans-serif;transform-origin:0 0;transform:scaleX(0.9950);">Page Layout</div>
<div class="t g" id="t8" style="left:222.26px;top:51.00px;font-size:10.6px;color:#333333;font-weight:400;font-style:normal;font-family:'Liberation Sans', sans-serif;transform-origin:0 0;transform:scaleX(1.0236);">Formulas</div>
<div class="t g" id="t9" style="left:282.26px;top:51.00px;font-size:10.6px;color:#333333;font-weight:400;font-style:normal;font-family:'Liberation Sans', sans-serif;transform-origin:0 0;transform:scaleX(1.0361);">Data</div>
<div class="t g" id="t10" style="left:320.26px;top:51.00px;font-size:10.6px;color:#333333;font-weight:400;font-style:normal;font-family:'Liberation Sans', sans-serif;transform-origin:0 0;transform:scaleX(0.9842);">Review</div>
<div class="t g" id="t11" style="left:370.46px;top:51.00px;font-size:10.6px;color:#333333;font-weight:400;font-style:normal;font-family:'Liberation Sans', sans-serif;transform-origin:0 0;transform:scaleX(0.9877);">View</div>
<div class="t g" id="t12" style="left:409.66px;top:51.00px;font-size:10.6px;color:#333333;font-weight:400;font-style:normal;font-family:'Liberation Sans', sans-serif;transform-origin:0 0;transform:scaleX(1.0208);">Developer</div>
<div class="t g" id="t13" style="left:475.26px;top:51.00px;font-size:10.6px;color:#333333;font-weight:400;font-style:normal;font-family:'Liberation Sans', sans-serif;transform-origin:0 0;transform:scaleX(1.0414);">Help</div>
<div class="t g" id="t14" style="left:514.46px;top:51.00px;font-size:10.6px;color:#333333;font-weight:400;font-style:normal;font-family:'Liberation Sans', sans-serif;transform-origin:0 0;transform:scaleX(1.0083);">Power Pivot</div>
<div class="t g" id="t15" style="left:100.26px;top:51.00px;font-size:10.6px;color:#1f1f1f;font-weight:700;font-style:normal;font-family:'Liberation Sans', sans-serif;transform-origin:0 0;transform:scaleX(1.0599);">Home</div>
<div class="t g" id="t16" style="left:622.26px;top:51.00px;font-size:10.6px;color:#242424;font-weight:400;font-style:normal;font-family:'Liberation Sans', sans-serif;transform-origin:0 0;transform:scaleX(1.0192);">Comments</div>
<div class="t g" id="t17" style="left:23.33px;top:104.00px;font-size:9.6px;color:#333;font-weight:400;font-style:normal;font-family:'Liberation Sans', sans-serif;transform-origin:0 0;transform:scaleX(0.9451);">Paste</div>
<div class="t g" id="t18" style="left:26.37px;top:137.00px;font-size:9px;color:#444;font-weight:400;font-style:normal;font-family:'Liberation Sans', sans-serif;transform-origin:0 0;transform:scaleX(0.9914);">Clipboard</div>
<div class="t g" id="t19" style="left:144.37px;top:137.00px;font-size:9px;color:#444;font-weight:400;font-style:normal;font-family:'Liberation Sans', sans-serif;transform-origin:0 0;transform:scaleX(1.0102);">Font</div>
<div class="t g" id="t20" style="left:186.79px;top:77.00px;font-size:10.2px;color:#bcbcbc;font-weight:400;font-style:normal;font-family:'Liberation Sans', sans-serif;transform-origin:0 0;transform:scaleX(0.9433);">14</div>
<div class="t g" id="t21" style="left:232.30px;top:102.00px;font-size:10px;color:#333;font-weight:400;font-style:normal;font-family:'Liberation Sans', sans-serif;transform-origin:0 0;transform:scaleX(1.0389);">Alignment</div>
<div class="t g" id="t22" style="left:292.30px;top:102.00px;font-size:10px;color:#333;font-weight:400;font-style:normal;font-family:'Liberation Sans', sans-serif;transform-origin:0 0;transform:scaleX(1.0175);">Number</div>
<div class="t g" id="t23" style="left:362.32px;top:76.00px;font-size:9.7px;color:#a6a6a6;font-weight:400;font-style:normal;font-family:'Liberation Sans', sans-serif;transform-origin:0 0;transform:scaleX(1.0434);">Conditional Formatting</div>
<div class="t g" id="t24" style="left:362.32px;top:98.00px;font-size:9.7px;color:#a6a6a6;font-weight:400;font-style:normal;font-family:'Liberation Sans', sans-serif;transform-origin:0 0;transform:scaleX(0.9988);">Format as Table</div>
<div class="t g" id="t25" style="left:362.32px;top:119.00px;font-size:9.7px;color:#a6a6a6;font-weight:400;font-style:normal;font-family:'Liberation Sans', sans-serif;transform-origin:0 0;transform:scaleX(0.9439);">Cell Styles</div>
<div class="t g" id="t26" style="left:399.37px;top:137.00px;font-size:9px;color:#444;font-weight:400;font-style:normal;font-family:'Liberation Sans', sans-serif;transform-origin:0 0;transform:scaleX(0.9463);">Styles</div>
<div class="t g" id="t27" style="left:498.30px;top:102.00px;font-size:10px;color:#333;font-weight:400;font-style:normal;font-family:'Liberation Sans', sans-serif;transform-origin:0 0;transform:scaleX(0.9535);">Cells</div>
<div class="t g" id="t28" style="left:537.30px;top:102.00px;font-size:10px;color:#333;font-weight:400;font-style:normal;font-family:'Liberation Sans', sans-serif;transform-origin:0 0;transform:scaleX(1.0203);">Editing</div>
<div class="t g" id="t29" style="left:583.30px;top:102.00px;font-size:10px;color:#b0b0b0;font-weight:400;font-style:normal;font-family:'Liberation Sans', sans-serif;transform-origin:0 0;transform:scaleX(1.0676);">Add-ins</div>
<div class="t g" id="t30" style="left:586.37px;top:137.00px;font-size:9px;color:#444;font-weight:400;font-style:normal;font-family:'Liberation Sans', sans-serif;transform-origin:0 0;transform:scaleX(0.9897);">Add-ins</div>
<div class="t g" id="t31" style="left:634.30px;top:102.00px;font-size:10px;color:#b0b0b0;font-weight:400;font-style:normal;font-family:'Liberation Sans', sans-serif;transform-origin:0 0;transform:scaleX(1.0175);">Analyze</div>
<div class="t g" id="t32" style="left:641.30px;top:116.00px;font-size:10px;color:#b0b0b0;font-weight:400;font-style:normal;font-family:'Liberation Sans', sans-serif;transform-origin:0 0;transform:scaleX(1.0509);">Data</div>
<div class="t g" id="t33" style="left:12.16px;top:163.00px;font-size:12px;color:#222;font-weight:400;font-style:normal;font-family:'Liberation Sans', sans-serif;transform-origin:0 0;transform:scaleX(0.9660);">EXP</div>
<div class="t g" id="t34" style="left:182.09px;top:163.00px;font-size:13px;color:#1a1a1a;font-weight:400;font-style:normal;font-family:'Liberation Sans', sans-serif;transform-origin:0 0;transform:scaleX(1.0184);">=TTEST(B3:B8,C3:C8,C11,C12)</div>
<div class="t g" id="t35" style="left:152.93px;top:163.00px;font-size:12.5px;color:#333;font-weight:700;font-style:italic;font-family:'Liberation Serif', serif;transform-origin:0 0;transform:scaleX(1.0939);">fx</div>
<div class="t g" id="t36" style="left:59.99px;top:211.00px;font-size:13.9px;color:#3a3a3a;font-weight:400;font-style:normal;font-family:'Liberation Sans', sans-serif;transform-origin:0 0;transform:scaleX(1.0000);">A</div>
<div class="t g" id="t37" style="left:181.24px;top:211.00px;font-size:13.9px;color:#3a3a3a;font-weight:400;font-style:normal;font-family:'Liberation Sans', sans-serif;transform-origin:0 0;transform:scaleX(1.0000);">B</div>
<div class="t g" id="t38" style="left:302.60px;top:211.00px;font-size:13.9px;color:#1e6b41;font-weight:400;font-style:normal;font-family:'Liberation Sans', sans-serif;transform-origin:0 0;transform:scaleX(1.0000);">C</div>
<div class="t g" id="t39" style="left:373.10px;top:211.00px;font-size:13.9px;color:#3a3a3a;font-weight:400;font-style:normal;font-family:'Liberation Sans', sans-serif;transform-origin:0 0;transform:scaleX(1.0000);">D</div>
<div class="t g" id="t40" style="left:443.74px;top:211.00px;font-size:13.9px;color:#3a3a3a;font-weight:400;font-style:normal;font-family:'Liberation Sans', sans-serif;transform-origin:0 0;transform:scaleX(1.0000);">E</div>
<div class="t g" id="t41" style="left:514.63px;top:211.00px;font-size:13.9px;color:#3a3a3a;font-weight:400;font-style:normal;font-family:'Liberation Sans', sans-serif;transform-origin:0 0;transform:scaleX(1.0000);">F</div>
<div class="t g" id="t42" style="left:583.97px;top:211.00px;font-size:13.9px;color:#3a3a3a;font-weight:400;font-style:normal;font-family:'Liberation Sans', sans-serif;transform-origin:0 0;transform:scaleX(1.0000);">G</div>
<div class="t g" id="t43" style="left:654.60px;top:211.00px;font-size:13.9px;color:#3a3a3a;font-weight:400;font-style:normal;font-family:'Liberation Sans', sans-serif;transform-origin:0 0;transform:scaleX(1.0000);">H</div>
<div class="t g" id="t44" style="left:11.42px;top:230.00px;font-size:14.3px;color:#3a3a3a;font-weight:400;font-style:normal;font-family:'Liberation Sans', sans-serif;transform-origin:0 0;transform:scaleX(1.0000);">3</div>
<div class="t g" id="t45" style="left:11.42px;top:250.00px;font-size:14.3px;color:#3a3a3a;font-weight:400;font-style:normal;font-family:'Liberation Sans', sans-serif;transform-origin:0 0;transform:scaleX(1.0000);">4</div>
<div class="t g" id="t46" style="left:11.42px;top:270.00px;font-size:14.3px;color:#3a3a3a;font-weight:400;font-style:normal;font-family:'Liberation Sans', sans-serif;transform-origin:0 0;transform:scaleX(1.0000);">5</div>
<div class="t g" id="t47" style="left:11.42px;top:291.00px;font-size:14.3px;color:#3a3a3a;font-weight:400;font-style:normal;font-family:'Liberation Sans', sans-serif;transform-origin:0 0;transform:scaleX(1.0000);">6</div>
<div class="t g" id="t48" style="left:11.42px;top:311.00px;font-size:14.3px;color:#3a3a3a;font-weight:400;font-style:normal;font-family:'Liberation Sans', sans-serif;transform-origin:0 0;transform:scaleX(1.0000);">7</div>
<div class="t g" id="t49" style="left:11.42px;top:331.00px;font-size:14.3px;color:#3a3a3a;font-weight:400;font-style:normal;font-family:'Liberation Sans', sans-serif;transform-origin:0 0;transform:scaleX(1.0000);">8</div>
<div class="t g" id="t50" style="left:11.42px;top:352.00px;font-size:14.3px;color:#3a3a3a;font-weight:400;font-style:normal;font-family:'Liberation Sans', sans-serif;transform-origin:0 0;transform:scaleX(1.0000);">9</div>
<div class="t g" id="t51" style="left:7.70px;top:372.00px;font-size:14.3px;color:#3a3a3a;font-weight:400;font-style:normal;font-family:'Liberation Sans', sans-serif;transform-origin:0 0;transform:scaleX(0.9682);">10</div>
<div class="t g" id="t52" style="left:7.70px;top:392.00px;font-size:14.3px;color:#3a3a3a;font-weight:400;font-style:normal;font-family:'Liberation Sans', sans-serif;transform-origin:0 0;transform:scaleX(1.0375);">11</div>
<div class="t g" id="t53" style="left:7.70px;top:413.00px;font-size:14.3px;color:#3a3a3a;font-weight:400;font-style:normal;font-family:'Liberation Sans', sans-serif;transform-origin:0 0;transform:scaleX(0.9682);">12</div>
<div class="t g" id="t54" style="left:7.70px;top:433.00px;font-size:14.3px;color:#1e6b41;font-weight:400;font-style:normal;font-family:'Liberation Sans', sans-serif;transform-origin:0 0;transform:scaleX(0.9682);">13</div>
<div class="t g" id="t55" style="left:7.70px;top:453.00px;font-size:14.3px;color:#3a3a3a;font-weight:400;font-style:normal;font-family:'Liberation Sans', sans-serif;transform-origin:0 0;transform:scaleX(0.9682);">14</div>
<div class="t g" id="t56" style="left:7.70px;top:473.00px;font-size:14.3px;color:#3a3a3a;font-weight:400;font-style:normal;font-family:'Liberation Sans', sans-serif;transform-origin:0 0;transform:scaleX(0.9682);clip-path:inset(0 0 8.4px 0);">15</div>
<div class="t g" id="t57" style="left:243.19px;top:230.00px;font-size:14px;color:#111;font-weight:400;font-style:normal;font-family:'Liberation Sans', sans-serif;transform-origin:0 0;transform:scaleX(0.9993);">22.3</div>
<div class="t g" id="t58" style="left:243.19px;top:250.00px;font-size:14px;color:#111;font-weight:400;font-style:normal;font-family:'Liberation Sans', sans-serif;transform-origin:0 0;transform:scaleX(0.9993);">54.3</div>
<div class="t g" id="t59" style="left:243.19px;top:270.00px;font-size:14px;color:#111;font-weight:400;font-style:normal;font-family:'Liberation Sans', sans-serif;transform-origin:0 0;transform:scaleX(0.9993);">12.3</div>
<div class="t g" id="t60" style="left:243.19px;top:291.00px;font-size:14px;color:#111;font-weight:400;font-style:normal;font-family:'Liberation Sans', sans-serif;transform-origin:0 0;transform:scaleX(0.9993);">32.5</div>
<div class="t g" id="t61" style="left:243.19px;top:311.00px;font-size:14px;color:#111;font-weight:400;font-style:normal;font-family:'Liberation Sans', sans-serif;transform-origin:0 0;transform:scaleX(0.9993);">19.3</div>
<div class="t g" id="t62" style="left:243.19px;top:331.00px;font-size:14px;color:#111;font-weight:400;font-style:normal;font-family:'Liberation Sans', sans-serif;transform-origin:0 0;transform:scaleX(0.9993);">33.4</div>
<div class="t g" id="t63" style="left:243.19px;top:352.00px;font-size:14px;color:#111;font-weight:400;font-style:normal;font-family:'Liberation Sans', sans-serif;transform-origin:0 0;transform:scaleX(0.9993);">35.4</div>
<div class="t g" id="t64" style="left:243.19px;top:372.00px;font-size:14px;color:#111;font-weight:400;font-style:normal;font-family:'Liberation Sans', sans-serif;transform-origin:0 0;transform:scaleX(0.9993);">27.1</div>
<div class="t g" id="t65" style="left:325.36px;top:230.00px;font-size:14px;color:#111;font-weight:400;font-style:normal;font-family:'Liberation Sans', sans-serif;transform-origin:0 0;transform:scaleX(0.9988);">12</div>
<div class="t g" id="t66" style="left:325.36px;top:250.00px;font-size:14px;color:#111;font-weight:400;font-style:normal;font-family:'Liberation Sans', sans-serif;transform-origin:0 0;transform:scaleX(0.9988);">43</div>
<div class="t g" id="t67" style="left:325.36px;top:270.00px;font-size:14px;color:#111;font-weight:400;font-style:normal;font-family:'Liberation Sans', sans-serif;transform-origin:0 0;transform:scaleX(0.9988);">23</div>
<div class="t g" id="t68" style="left:313.69px;top:291.00px;font-size:14px;color:#111;font-weight:400;font-style:normal;font-family:'Liberation Sans', sans-serif;transform-origin:0 0;transform:scaleX(0.9993);">27.6</div>
<div class="t g" id="t69" style="left:313.69px;top:311.00px;font-size:14px;color:#111;font-weight:400;font-style:normal;font-family:'Liberation Sans', sans-serif;transform-origin:0 0;transform:scaleX(0.9993);">24.7</div>
<div class="t g" id="t70" style="left:313.69px;top:331.00px;font-size:14px;color:#111;font-weight:400;font-style:normal;font-family:'Liberation Sans', sans-serif;transform-origin:0 0;transform:scaleX(0.9993);">21.4</div>
<div class="t g" id="t71" style="left:333.13px;top:413.00px;font-size:14px;color:#111;font-weight:400;font-style:normal;font-family:'Liberation Sans', sans-serif;transform-origin:0 0;transform:scaleX(1.0000);">1</div>
<div class="t g" id="t72" style="left:102.63px;top:393.00px;font-size:13.9px;color:#1a1100;font-weight:400;font-style:normal;font-family:'Liberation Sans', sans-serif;transform-origin:0 0;transform:scaleX(1.0289);">Tails</div>
<div class="t g" id="t73" style="left:102.63px;top:414.00px;font-size:13.9px;color:#1a1100;font-weight:400;font-style:normal;font-family:'Liberation Sans', sans-serif;transform-origin:0 0;transform:scaleX(0.9826);">Type</div>
<div class="t g" id="t74" style="left:102.23px;top:434.00px;font-size:13.9px;color:#111;font-weight:400;font-style:normal;font-family:'Liberation Sans', sans-serif;transform-origin:0 0;transform:scaleX(1.0307);">Probability one tail</div>
<div class="t g" id="t75" style="left:274.53px;top:393.00px;font-size:13.9px;color:#1a1100;font-weight:400;font-style:normal;font-family:'Liberation Sans', sans-serif;transform-origin:0 0;transform:scaleX(1.1143);">"hello"</div>
<div class="t g" id="t76" style="left:99.81px;top:489.00px;font-size:11.3px;color:#333;font-weight:400;font-style:normal;font-family:'Liberation Sans', sans-serif;transform-origin:0 0;transform:scaleX(0.9883);">Sheet22</div>
<div class="t g" id="t77" style="left:160.61px;top:489.00px;font-size:11.3px;color:#333;font-weight:400;font-style:normal;font-family:'Liberation Sans', sans-serif;transform-origin:0 0;transform:scaleX(1.0012);">Sheet11</div>
<div class="t g" id="t78" style="left:220.61px;top:489.00px;font-size:11.3px;color:#333;font-weight:400;font-style:normal;font-family:'Liberation Sans', sans-serif;transform-origin:0 0;transform:scaleX(0.9930);">Sheet12</div>
<div class="t g" id="t79" style="left:281.79px;top:487.00px;font-size:11.6px;color:#1a1a1a;font-weight:400;font-style:normal;font-family:'Liberation Sans', sans-serif;transform-origin:0 0;transform:scaleX(0.9783);-webkit-text-stroke:0.35px #1a1a1a;">TTEST function</div>
<div class="t g" id="t80" style="left:10.37px;top:512.00px;font-size:9px;color:#4a4a4a;font-weight:400;font-style:normal;font-family:'Liberation Sans', sans-serif;transform-origin:0 0;transform:scaleX(0.9797);">Edit</div>
<div class="t g" id="t81" style="left:89.37px;top:512.00px;font-size:9px;color:#2a2a2a;font-weight:700;font-style:normal;font-family:'Liberation Sans', sans-serif;transform-origin:0 0;transform:scaleX(0.9689);">Accessibility: Investigate</div>
<div class="t g" id="t82" style="left:684.37px;top:512.00px;font-size:9px;color:#a8a8a8;font-weight:400;font-style:normal;font-family:'Liberation Sans', sans-serif;transform-origin:0 0;transform:scaleX(0.9639);">100%</div>
</div>
</body></html>
